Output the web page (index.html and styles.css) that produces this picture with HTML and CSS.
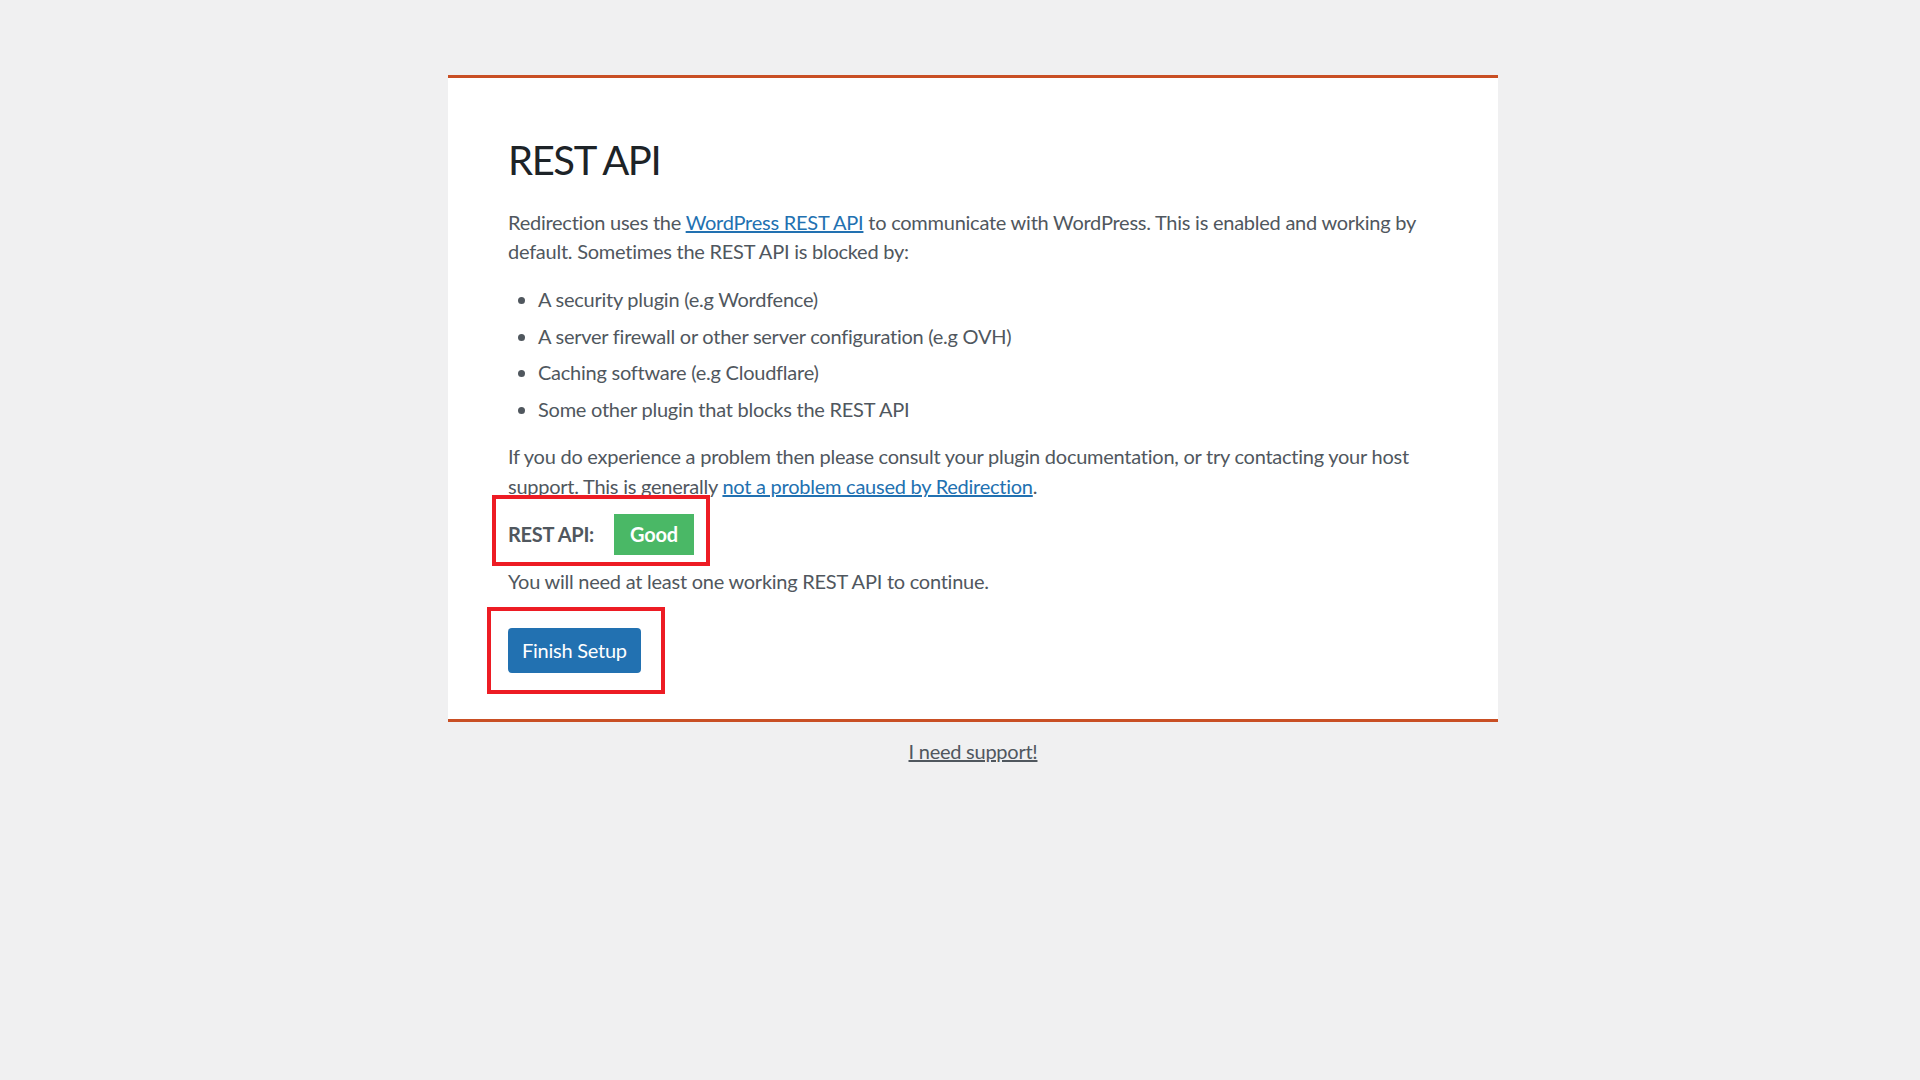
FILE: index.html
```html
<!DOCTYPE html>
<html lang="en">
<head>
<meta charset="utf-8">
<title>Redirection - REST API</title>
<link rel="stylesheet" href="styles.css">
</head>
<body>
<div class="wrap">
  <div class="card">
    <h1 class="title">REST API</h1>
    <p class="text">Redirection uses the <a class="link" href="#">WordPress REST API</a> to communicate with WordPress. This is enabled and working by default. Sometimes the REST API is blocked by:</p>
    <ul class="list">
      <li class="item">A security plugin (e.g Wordfence)</li>
      <li class="item">A server firewall or other server configuration (e.g OVH)</li>
      <li class="item">Caching software (e.g Cloudflare)</li>
      <li class="item">Some other plugin that blocks the REST API</li>
    </ul>
    <p class="text">If you do experience a problem then please consult your plugin documentation, or try contacting your host support. This is generally <a class="link" href="#">not a problem caused by Redirection</a>.</p>
    <div class="status">
      <span class="status-label">REST API:</span>
      <span class="badge">Good</span>
      <span class="mark mark-status"></span>
    </div>
    <p class="text note">You will need at least one working REST API to continue.</p>
    <div class="actions">
      <button class="button" type="button">Finish Setup</button>
      <span class="mark mark-button"></span>
    </div>
  </div>
  <div class="footer">
    <a class="support" href="#">I need support!</a>
  </div>
</div>
</body>
</html>
```
FILE: styles.css
```css
html, body {
  margin: 0;
  padding: 0;
  background: #f0f0f1;
}

body {
  font-family: Lato, "Open Sans", sans-serif;
  font-size: 20px;
  line-height: 29.4px;
  letter-spacing: -0.25px;
  color: #50575e;
  padding-left: 26px;
  padding-top: 75px;
}

.wrap {
  width: 1050px;
  margin: 0 auto;
}

.card {
  background: #fff;
  border-top: 3px solid #c94f24;
  border-bottom: 3px solid #c94f24;
  padding: 58px 60px 46px 60px;
}

.title {
  margin: 0 0 24px;
  font-size: 40px;
  line-height: 48px;
  font-weight: 400;
  letter-spacing: -1.4px;
  color: #1d2327;
}

.text {
  margin: 0 0 18px;
}

.link {
  color: #2271b1;
  text-decoration: underline;
}

.list {
  margin: 0 0 18px;
  padding: 0 0 0 30px;
}

.item + .item {
  margin-top: 7.3px;
}

.status {
  position: relative;
  display: flex;
  align-items: center;
  gap: 20px;
  height: 41px;
  margin-top: -5px;
  margin-bottom: 12px;
}

.status-label {
  font-weight: 700;
  color: #50575e;
}

.badge {
  display: inline-block;
  height: 41px;
  line-height: 41px;
  padding: 0 16px;
  background: #4ab866;
  color: #fff;
  font-weight: 700;
}

.note {
  margin-bottom: 31px;
}

.actions {
  position: relative;
  display: flex;
}

.button {
  font-family: inherit;
  font-size: 20px;
  letter-spacing: -0.25px;
  height: 45px;
  padding: 0 14px;
  border: none;
  border-radius: 4px;
  background: #2271b1;
  color: #fff;
  cursor: pointer;
}

.mark {
  position: absolute;
  border: 4px solid #ed1c24;
  box-sizing: border-box;
  pointer-events: none;
}

.mark-status {
  left: -16px;
  top: -19px;
  width: 218px;
  height: 71px;
}

.mark-button {
  left: -21px;
  top: -21px;
  width: 178px;
  height: 87px;
}

.footer {
  text-align: center;
  margin-top: 15px;
}

.support {
  color: #50575e;
  text-decoration: underline;
}
```
